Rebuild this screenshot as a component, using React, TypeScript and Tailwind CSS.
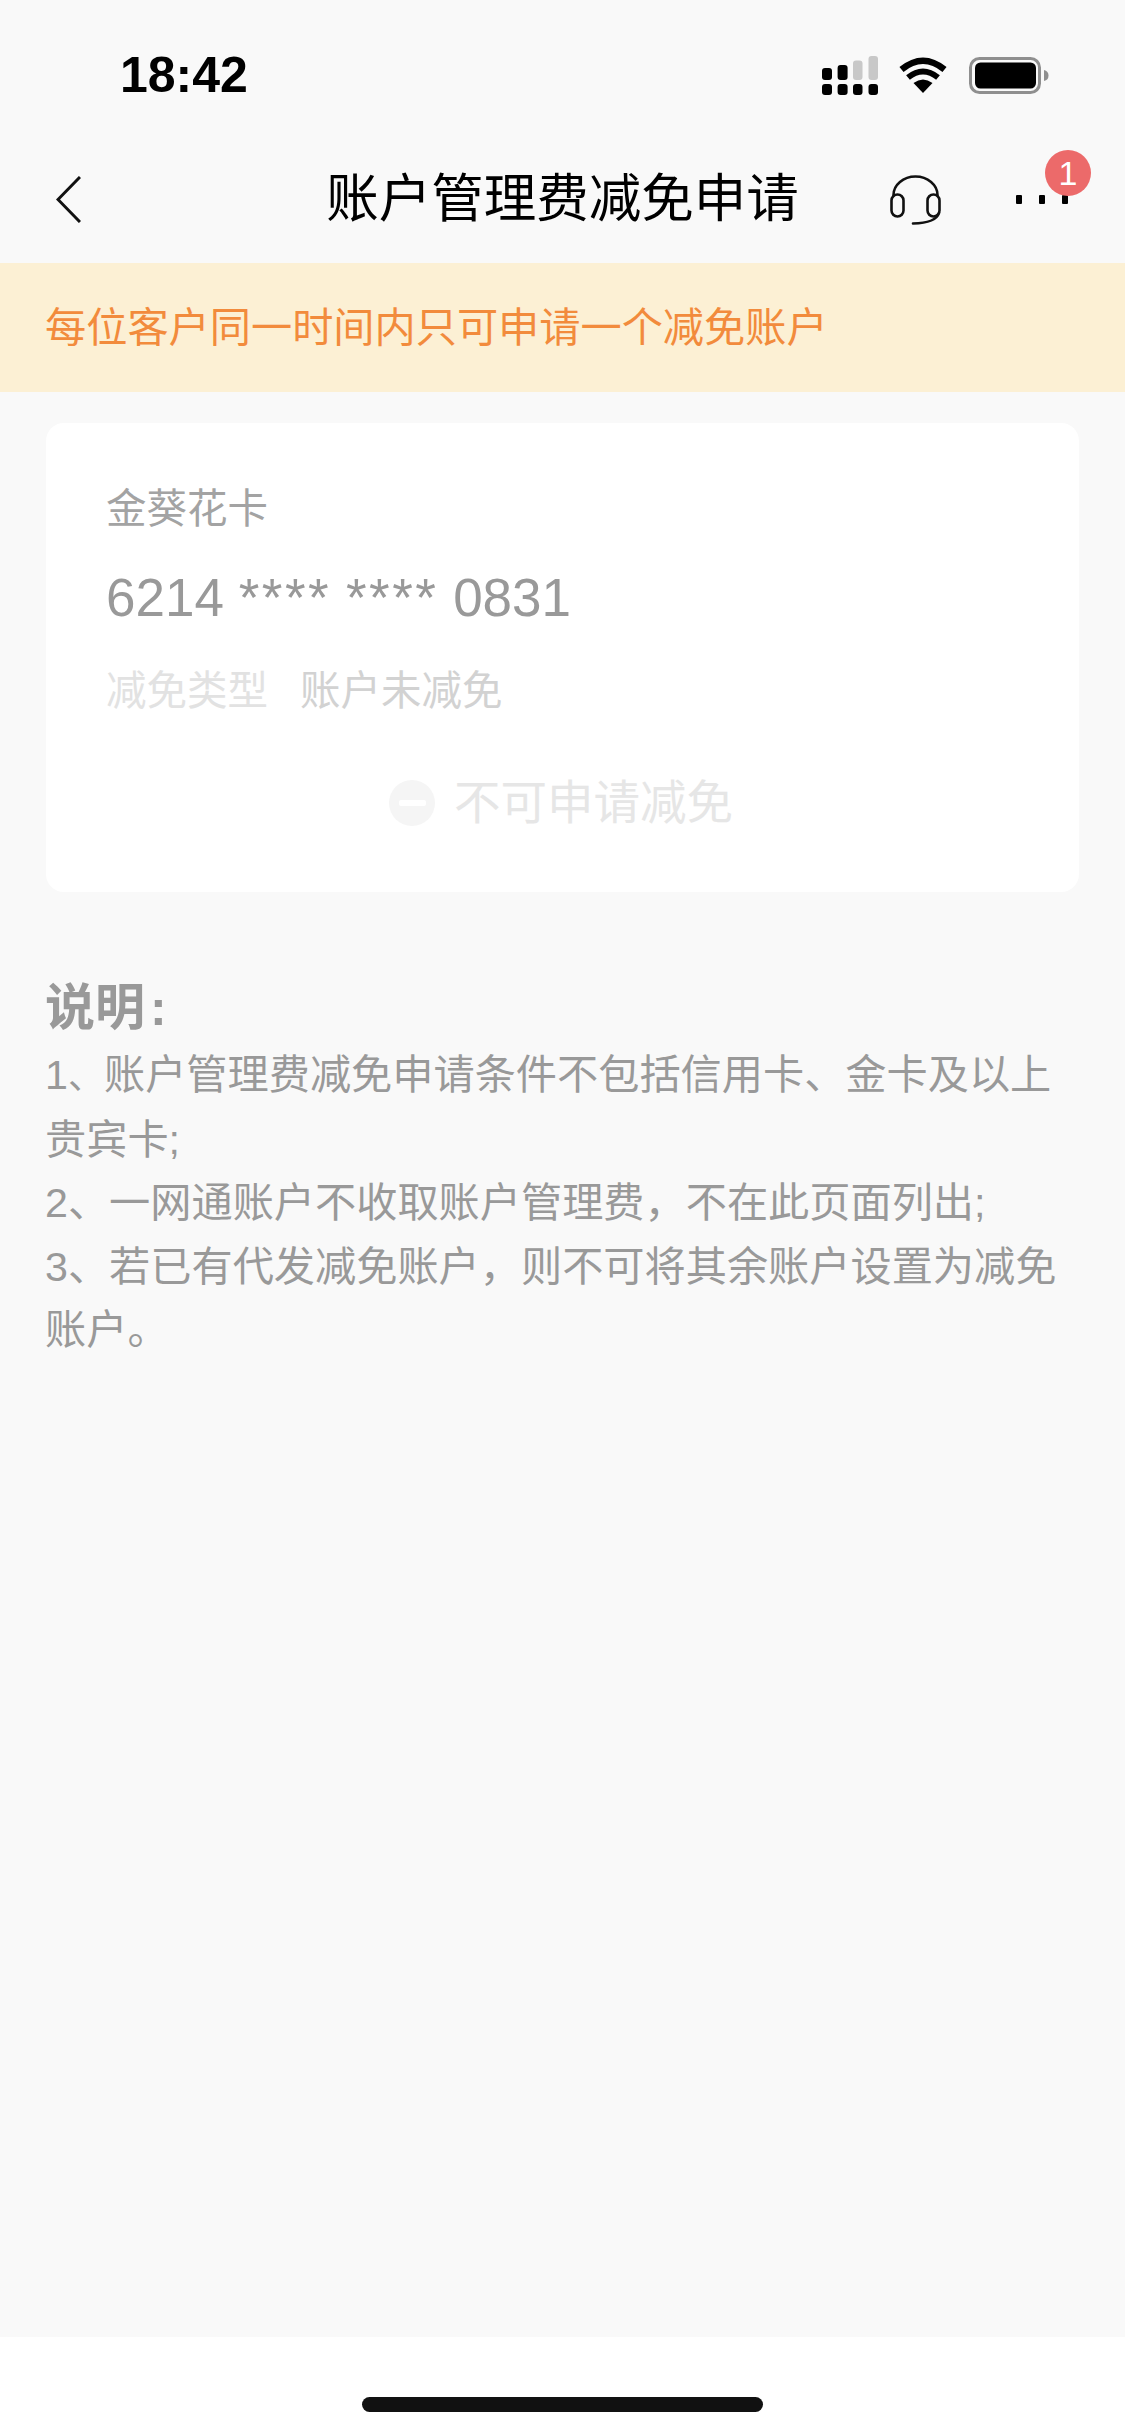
const cjk = "font-['Liberation_Sans','Noto_Sans_CJK_SC',sans-serif]";

const StatusIcons = () => (
  <div className="flex items-center">
    <svg width="56" height="39" viewBox="0 0 56 39">
      <rect x="0" y="12" width="10" height="12" rx="3" fill="#000" />
      <rect x="15.6" y="9" width="10" height="15" rx="3" fill="#000" />
      <rect x="31" y="4.5" width="9.5" height="19.5" rx="3" fill="#c8c8c8" />
      <rect x="46.5" y="0" width="9.5" height="24" rx="3" fill="#c8c8c8" />
      <rect x="0" y="28" width="10" height="11" rx="3" fill="#000" />
      <rect x="15.6" y="28" width="10" height="11" rx="3" fill="#000" />
      <rect x="31" y="28" width="9.5" height="11" rx="3" fill="#000" />
      <rect x="46.5" y="28" width="9.5" height="11" rx="3" fill="#000" />
    </svg>
    <svg className="ml-[21px]" width="48" height="36" viewBox="0 0 48 36">
      <path d="M24 36 L14.5 26 Q24 19 33.5 26 Z" fill="#000" />
      <path d="M9 20.5 Q24 8.5 39 20.5" fill="none" stroke="#000" strokeWidth="6" />
      <path d="M2.5 12.5 Q24 -5 45.5 12.5" fill="none" stroke="#000" strokeWidth="6.5" />
    </svg>
    <svg className="ml-[22px]" width="80" height="37" viewBox="0 0 80 37">
      <rect x="1.5" y="1.5" width="69" height="34" rx="9" fill="none" stroke="#8f8f8f" strokeWidth="3" />
      <rect x="6" y="5.5" width="61" height="26" rx="5.5" fill="#000" />
      <path d="M75 13 Q79.5 14 79.5 18.5 Q79.5 23 75 24 Z" fill="#8f8f8f" />
    </svg>
  </div>
);

const Headset = () => (
  <svg width="51" height="50" viewBox="0 0 51 50" fill="none" stroke="#111" strokeWidth="2.6" strokeLinecap="round">
    <path d="M3.5 20 A22 18.5 0 0 1 47.5 20" />
    <rect x="1.5" y="19.5" width="12" height="22" rx="6" />
    <rect x="37.5" y="19.5" width="12" height="22" rx="6" />
    <path d="M49 38 Q46 48 23 48.5" />
  </svg>
);

const App = () => {
  return (
    <div className={`h-[2435px] w-[1125px] flex flex-col bg-[#f9f9f9] ${cjk}`}>
      <div className="h-[136px] pt-[14px] pl-[120px] pr-[76px] flex items-center justify-between">
        <span className="text-[50px] font-bold leading-none text-black">18:42</span>
        <StatusIcons />
      </div>

      <div className="h-[127px] grid grid-cols-[1fr_auto_1fr] items-center">
        <div className="pl-[56px]">
          <svg width="25" height="47" viewBox="0 0 25 47" fill="none" stroke="#111" strokeWidth="3">
            <path d="M24 1 L2 23.5 L24 46" />
          </svg>
        </div>
        <h1 className="text-[52.5px] leading-none font-normal text-black">账户管理费减免申请</h1>
        <div className="flex items-center justify-end gap-[75px] pr-[57px]">
          <Headset />
          <div className="relative flex gap-[17px]">
            <span className="w-[6px] h-[9px] rounded-[1px] bg-black" />
            <span className="w-[6px] h-[9px] rounded-[1px] bg-black" />
            <span className="w-[6px] h-[9px] rounded-[1px] bg-black" />
            <span className="absolute left-[29px] top-[-45px] w-[46px] h-[46px] rounded-full bg-[#ec6a6a] text-white text-[34px] leading-[46px] text-center">
              1
            </span>
          </div>
        </div>
      </div>

      <div className="h-[129px] bg-[#fcf0d4] pl-[45px] pt-[2px] flex items-center text-[41.2px] leading-none text-[#f28b3c]">
        每位客户同一时间内只可申请一个减免账户
      </div>

      <div className="mx-[46px] mt-[31px] h-[469px] rounded-[18px] bg-white px-[60px] pt-[62px]">
        <div className="text-[40.5px] leading-[48px] text-[#a3a3a3]">金葵花卡</div>
        <div className="mt-[35px] text-[53px] leading-[60px] text-[#999999]">
          6214 <span className="tracking-[2.5px]">****</span> <span className="tracking-[2.5px]">****</span> 0831
        </div>
        <div className="mt-[39px] flex gap-[32px] text-[40.5px] leading-[48px] text-[#e2e2e2]">
          <span>减免类型</span>
          <span className="text-[#d2d2d2]">账户未减免</span>
        </div>
        <div className="mt-[58px] flex items-center justify-center gap-[19px] pr-[3px] h-[60px]">
          <span className="w-[46px] h-[46px] rounded-full bg-[#f5f5f5] flex items-center justify-center">
            <span className="w-[27px] h-[6px] rounded-[2px] bg-white" />
          </span>
          <span className="text-[46.5px] leading-none text-[#e6e6e6]">不可申请减免</span>
        </div>
      </div>

      <div className="mt-[84px] px-[45px] text-[#999999]">
        <div className="text-[50px] leading-[64px] font-bold">
          说明<span className="ml-[5px]">:</span>
        </div>
        <div className="mt-[4px] text-[41.2px] leading-[63.5px]">
          <p>
            1<span className="text-[36px]">、</span>账户管理费减免申请条件不包括信用卡、金卡及以上
            <br />
            贵宾卡;
          </p>
          <p>2、一网通账户不收取账户管理费，不在此页面列出;</p>
          <p>3、若已有代发减免账户，则不可将其余账户设置为减免账户。</p>
        </div>
      </div>

      <div className="flex-1" />
      <div className="h-[98px] bg-white pt-[60px] flex justify-center">
        <span className="block w-[401px] h-[15px] rounded-[8px] bg-[#111111]" />
      </div>
    </div>
  );
};

export default App;
